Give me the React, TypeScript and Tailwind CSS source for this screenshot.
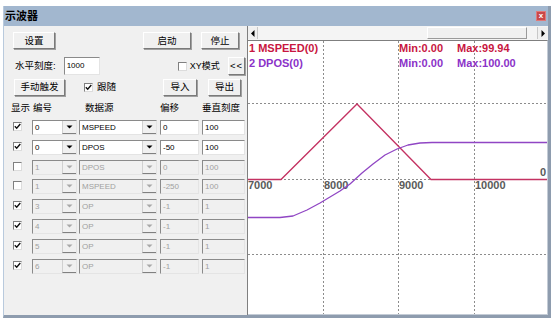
import React from "react";

const Check = ({ checked, disabled }: { checked: boolean; disabled?: boolean }) => (
  <div className="w-[9px] h-[9px] bg-white border border-t-[#808080] border-l-[#808080] border-b-[#dcdcdc] border-r-[#dcdcdc] flex items-center justify-center">
    {checked ? (
      <svg width="7" height="7" viewBox="0 0 7 7">
        <path d="M0.8 3.2 L2.7 5.2 L6.3 1" fill="none" stroke={disabled ? "#222" : "#111"} strokeWidth="1.4" />
      </svg>
    ) : null}
  </div>
);

const Btn = ({ cls, children }: { cls: string; children: React.ReactNode }) => (
  <div
    className={
      "flex items-center justify-center bg-[#f0f0f0] border border-t-white border-l-white border-b-[#7a7a7a] border-r-[#7a7a7a] shadow-[1px_1px_0_#a0a0a0] text-[9.5px] text-black leading-none " +
      cls
    }
  >
    {children}
  </div>
);

const Arrow = ({ enabled }: { enabled: boolean }) => (
  <svg width="7" height="4" viewBox="0 0 7 4">
    <path d="M0.5 0.5 L6.5 0.5 L3.5 3.5 Z" fill={enabled ? "#000" : "#a8a8a8"} />
  </svg>
);

const Combo = ({ value, enabled, cls }: { value: string; enabled: boolean; cls: string }) => (
  <div
    className={
      "flex h-full border border-t-[#8a8a8a] border-l-[#8a8a8a] border-b-[#e4e4e4] border-r-[#e4e4e4] " +
      (enabled ? "bg-white text-black " : "bg-[#f0f0f0] text-[#a0a0a0] ") +
      cls
    }
  >
    <div className="flex-1 pl-[2px] text-[8px] leading-[13px] overflow-hidden">{value}</div>
    <div className="w-[14px] h-full flex items-center justify-center bg-[#f0f0f0] border-l border-l-[#d0d0d0] border-b border-b-[#808080]">
      <Arrow enabled={enabled} />
    </div>
  </div>
);

const Field = ({ value, enabled, cls }: { value: string; enabled: boolean; cls: string }) => (
  <div
    className={
      "h-full border border-t-[#8a8a8a] border-l-[#8a8a8a] border-b-[#e4e4e4] border-r-[#e4e4e4] pl-[2px] text-[8px] leading-[13px] " +
      (enabled ? "bg-white text-black " : "bg-[#f0f0f0] text-[#a0a0a0] ") +
      cls
    }
  >
    {value}
  </div>
);

const rows = [
  { show: true, num: "0", src: "MSPEED", off: "0", scale: "100", en: true },
  { show: true, num: "0", src: "DPOS", off: "-50", scale: "100", en: true },
  { show: false, num: "1", src: "DPOS", off: "0", scale: "100", en: false },
  { show: false, num: "1", src: "MSPEED", off: "-250", scale: "100", en: false },
  { show: true, num: "3", src: "OP", off: "-1", scale: "1", en: false },
  { show: true, num: "4", src: "OP", off: "-1", scale: "1", en: false },
  { show: true, num: "5", src: "OP", off: "-1", scale: "1", en: false },
  { show: true, num: "6", src: "OP", off: "-1", scale: "1", en: false },
];

const Chart = () => {
  const grid = "#8c8c8c";
  return (
    <svg width="299" height="273" viewBox="0 0 299 273" className="block">
      {[75, 150, 226].map((x) => (
        <line key={"v" + x} x1={x + 0.5} y1={0} x2={x + 0.5} y2={273} stroke={grid} strokeWidth="1" strokeDasharray="2 2" />
      ))}
      {[62, 138, 213].map((y) => (
        <line key={"h" + y} x1={0} y1={y + 0.5} x2={299} y2={y + 0.5} stroke={grid} strokeWidth="1" strokeDasharray="2 2" />
      ))}
      <g fontFamily="'Liberation Sans', Arial, sans-serif" fontSize="11" fontWeight="bold">
        <text x="1" y="11" fill="#c8163f">1 MSPEED(0)</text>
        <text x="1" y="26" fill="#8b32c8">2 DPOS(0)</text>
        <text x="151" y="11" fill="#c8163f">Min:0.00</text>
        <text x="209" y="11" fill="#c8163f">Max:99.94</text>
        <text x="151" y="26" fill="#8b32c8">Min:0.00</text>
        <text x="209" y="26" fill="#8b32c8">Max:100.00</text>
        <g fill="#5a5a5a">
          <text x="0" y="148">7000</text>
          <text x="76" y="148">8000</text>
          <text x="151" y="148">9000</text>
          <text x="227" y="148">10000</text>
          <text x="298" y="135" textAnchor="end">0</text>
        </g>
      </g>
      <polyline
        points="0,138.5 33,138.5 109,63 183,138.5 299,138.5"
        fill="none"
        stroke="#c43262"
        strokeWidth="1.3"
      />
      <polyline
        points="0,176.5 32,176.5 45,175 59,169 72,162 82,156 92,150 102,143 114,132 125,123 137,114 149,108 160,104 172,102 184,101.5 299,101.5"
        fill="none"
        stroke="#9046c4"
        strokeWidth="1.3"
        strokeLinejoin="round"
      />
    </svg>
  );
};

export default function App() {
  return (
    <div className="w-[559px] h-[327px] bg-white pt-[6px] pl-[3px] font-['Liberation_Sans','Noto_Sans_CJK_SC',sans-serif] overflow-hidden">
      <div className="w-[548px] h-[312px] flex flex-col border-l border-l-[#b9cadd] border-r-[3px] border-r-[#8e9cae] border-b-[3px] border-b-[#8e9cae] bg-[#f0f0f0]">
        {/* title bar */}
        <div className="h-[20px] shrink-0 bg-[#a2b7cf] flex items-center pl-[1px] pr-[2px]">
          <span className="text-[11px] font-bold text-black leading-none">示波器</span>
          <div className="ml-auto mr-[0px] w-[10px] h-[10px] bg-[#c9484a] border border-[#e07a7a] flex items-center justify-center text-white text-[8px] font-bold leading-none">
            x
          </div>
        </div>
        {/* body */}
        <div className="flex flex-1 min-h-0">
          {/* left panel */}
          <div className="w-[243px] shrink-0 flex flex-col">
            <div className="flex h-[17px] mt-[6px]">
              <Btn cls="ml-[9px] w-[42px] h-[17px]">设置</Btn>
              <Btn cls="ml-[88px] w-[48px] h-[17px]">启动</Btn>
              <Btn cls="ml-[10px] w-[38px] h-[17px]">停止</Btn>
            </div>
            <div className="flex items-center h-[20px] mt-[7px]">
              <span className="ml-[11px] text-[9.5px] leading-none">水平刻度:</span>
              <div className="ml-[8px] w-[36px] h-[18px] bg-white border border-t-[#8a8a8a] border-l-[#8a8a8a] border-b-[#e4e4e4] border-r-[#e4e4e4] pl-[2px] text-[8px] leading-[16px]">
                1000
              </div>
              <div className="ml-[78px]">
                <Check checked={false} />
              </div>
              <span className="ml-[3px] text-[9px] leading-none">XY模式</span>
              <Btn cls="ml-auto mr-[2px] w-[17px] h-[18px] text-[8px] tracking-[1px]">&lt;&lt;</Btn>
            </div>
            <div className="flex items-center h-[18px] mt-[2px]">
              <Btn cls="ml-[10px] w-[51px] h-[17px]">手动触发</Btn>
              <div className="ml-[19px]">
                <Check checked={true} />
              </div>
              <span className="ml-[4px] text-[9.5px] leading-none">跟随</span>
              <Btn cls="ml-[47px] w-[34px] h-[17px]">导入</Btn>
              <Btn cls="ml-[11px] w-[33px] h-[17px]">导出</Btn>
            </div>
            <div className="flex items-center h-[12px] mt-[6px] text-[9.5px] leading-none">
              <span className="ml-[7px] w-[22px]">显示</span>
              <span className="w-[52px]">编号</span>
              <span className="w-[75px]">数据源</span>
              <span className="w-[42px]">偏移</span>
              <span>垂直刻度</span>
            </div>
            <div className="flex flex-col gap-[4.8px] mt-[6px]">
              {rows.map((r, i) => (
                <div key={i} className="flex h-[15px]">
                  <div className="w-[28px] pl-[9px] pt-[2px]">
                    <Check checked={r.show} />
                  </div>
                  <Combo value={r.num} enabled={r.en} cls="w-[45px]" />
                  <Combo value={r.src} enabled={r.en} cls="ml-[2px] w-[78px]" />
                  <Field value={r.off} enabled={r.en} cls="ml-[3px] w-[39px]" />
                  <Field value={r.scale} enabled={r.en} cls="ml-[3px] w-[43px]" />
                </div>
              ))}
            </div>
          </div>
          {/* right panel */}
          <div className="flex-1 flex flex-col border-l border-l-[#7f7f7f]">
            <div className="h-[14px] shrink-0 flex bg-[#f4f4f4] pt-[1px]">
              <div className="w-[10px] h-[12px] flex items-center justify-center bg-[#f0f0f0] border-r border-r-[#c8c8c8]">
                <svg width="4" height="7" viewBox="0 0 4 7">
                  <path d="M3.5 0 L3.5 7 L0 3.5 Z" fill="#000" />
                </svg>
              </div>
              <div className="flex-1 flex">
                <div className="ml-[169px] w-[100px] h-[12px] bg-[#f0f0f0] border border-t-white border-l-white border-b-[#9a9a9a] border-r-[#9a9a9a]" />
              </div>
              <div className="w-[11px] h-[12px] flex items-center justify-center bg-[#f0f0f0] border-l border-l-[#c8c8c8]">
                <svg width="4" height="7" viewBox="0 0 4 7">
                  <path d="M0.5 0 L0.5 7 L4 3.5 Z" fill="#000" />
                </svg>
              </div>
            </div>
            <div className="flex-1 bg-white border-t border-t-[#7f7f7f] border-r border-r-[#c4ccd6] border-b border-b-[#c4ccd6] overflow-hidden">
              <Chart />
            </div>
          </div>
        </div>
      </div>
    </div>
  );
}
